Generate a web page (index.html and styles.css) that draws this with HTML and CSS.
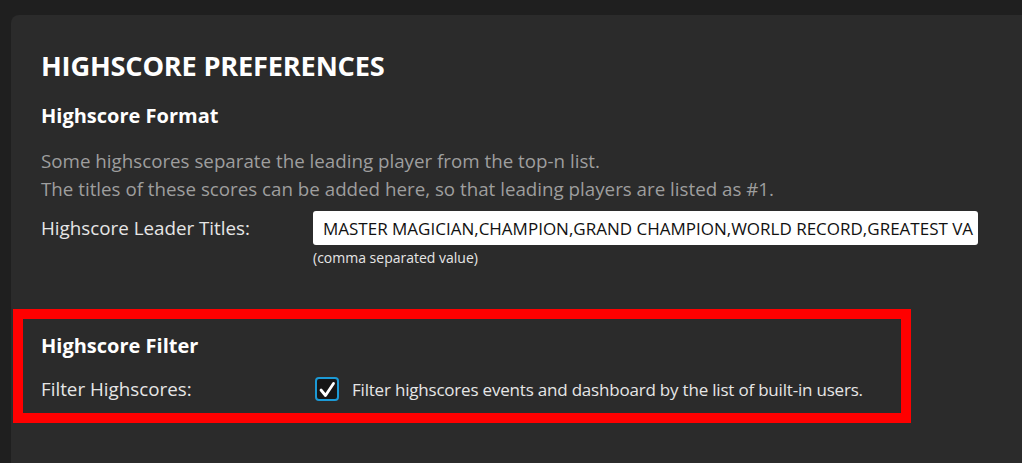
FILE: index.html
```html
<!DOCTYPE html>
<html>
<head>
<meta charset="utf-8">
<link rel="stylesheet" href="styles.css">
</head>
<body>
<div class="panel">
  <h1 class="title">HIGHSCORE PREFERENCES</h1>
  <section class="group">
    <h2 class="heading">Highscore Format</h2>
    <p class="hint">Some highscores separate the leading player from the top-n list.<br>The titles of these scores can be added here, so that leading players are listed as #1.</p>
    <div class="row">
      <label class="label">Highscore Leader Titles:</label>
      <div class="field">
        <div class="input">MASTER MAGICIAN,CHAMPION,GRAND CHAMPION,WORLD RECORD,GREATEST VA</div>
        <div class="note">(comma separated value)</div>
      </div>
    </div>
  </section>
  <section class="group filter">
    <h2 class="heading">Highscore Filter</h2>
    <div class="row">
      <label class="label">Filter Highscores:</label>
      <div class="check-row">
        <span class="checkbox"><svg width="20" height="20" viewBox="0 0 20 20"><path d="M4 11 L8.5 16.5 L16.5 4.5" fill="none" stroke="#fff" stroke-width="2.8" stroke-linecap="round" stroke-linejoin="round"/></svg></span>
        <span class="check-text">Filter highscores events and dashboard by the list of built-in users.</span>
      </div>
    </div>
  </section>
</div>
</body>
</html>
```
FILE: styles.css
```css
html, body {
  margin: 0;
  padding: 0;
  background: #1f1f1f;
  height: 100%;
  overflow: hidden;
}
body {
  font-family: "Open Sans", "Noto Sans", sans-serif;
  color: #e6e6e6;
  padding: 15px 0 0 11px;
  box-sizing: border-box;
}
.panel {
  background: #2b2b2b;
  border-top-left-radius: 8px;
  height: 100%;
  padding: 30px 0 0 30px;
  box-sizing: border-box;
}
.title {
  margin: 0;
  font-size: 27.2px;
  font-weight: 700;
  color: #ffffff;
  line-height: 42px;
  letter-spacing: -0.2px;
}
.heading {
  margin: 0;
  font-size: 20px;
  font-weight: 700;
  color: #ffffff;
  line-height: 26px;
}
.group {
  margin-top: 16px;
}
.hint {
  margin: 18px 0 0 0;
  font-size: 18.75px;
  line-height: 28px;
  color: #9e9e9e;
}
.row {
  display: flex;
  align-items: flex-start;
}
.group .row {
  margin-top: 8px;
}
.label {
  width: 272px;
  flex: none;
  font-size: 18.8px;
  line-height: 34px;
  color: #e6e6e6;
}
.field {
  display: flex;
  flex-direction: column;
}
.input {
  width: 665px;
  height: 34px;
  box-sizing: border-box;
  background: #ffffff;
  border-radius: 3px;
  padding: 2px 3px 0 10px;
  font-size: 17px;
  line-height: 32px;
  color: #111;
  white-space: nowrap;
  overflow: hidden;
}
.note {
  font-size: 14px;
  line-height: 26px;
  color: #e6e6e6;
}
.filter {
  margin-top: 38px;
  margin-left: -28px;
  width: 898px;
  box-sizing: border-box;
  border: 10px solid #ff0000;
  padding: 14px 0 7px 18px;
}
.filter .row {
  margin-top: 13px;
}
.check-row {
  display: flex;
  align-items: center;
  gap: 13px;
  height: 34px;
}
.checkbox {
  width: 24px;
  height: 24px;
  box-sizing: border-box;
  border: 2px solid #1c9ad6;
  border-radius: 4px;
  background: #161616;
  display: flex;
  align-items: center;
  justify-content: center;
  margin-left: 2px;
}
.check-text {
  font-size: 17px;
  color: #e6e6e6;
  letter-spacing: -0.2px;
}
```
